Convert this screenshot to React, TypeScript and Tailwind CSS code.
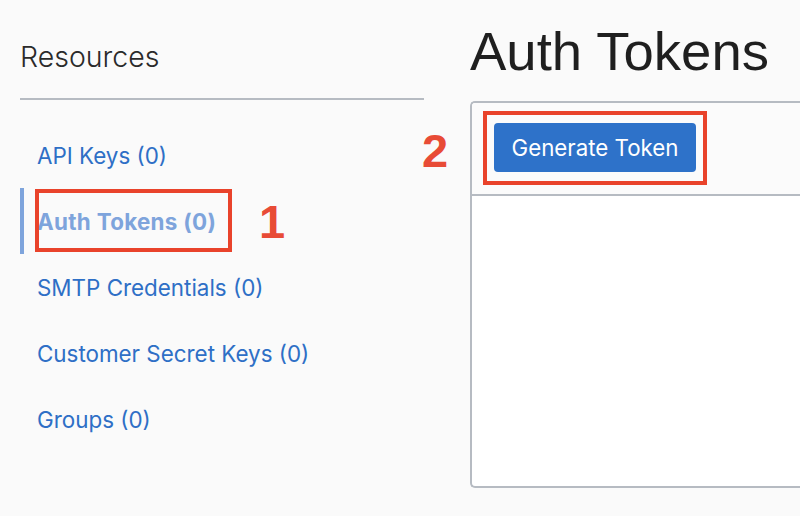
const resources = [
  { id: "api-keys", label: "API Keys (0)" },
  { id: "auth-tokens", label: "Auth Tokens (0)", active: true },
  { id: "smtp", label: "SMTP Credentials (0)" },
  { id: "secret-keys", label: "Customer Secret Keys (0)" },
  { id: "groups", label: "Groups (0)" },
];

export default function App() {
  return (
    <div className="flex h-[516px] w-[800px] overflow-hidden bg-[#fafafa] font-['Inter',sans-serif]">
      {/* left: resources menu */}
      <aside className="ml-[20px] w-[404px] shrink-0">
        <div className="h-[100px] border-b-2 border-[#b6bbc2] pt-[39px]">
          <h2 className="text-[28.5px] font-light leading-[36px] text-[#2a2a2a]">Resources</h2>
        </div>
        <nav className="mt-[22px] flex flex-col">
          {resources.map((item) => (
            <div
              key={item.id}
              className={`relative flex h-[66px] items-center border-l-4 pl-[13px] pt-[3px] ${
                item.active ? "border-[#7ea4dc]" : "border-transparent"
              }`}
            >
              <a
                href="#"
                className={`leading-none ${
                  item.active
                    ? "text-[22.4px] font-bold tracking-[0.3px] text-[#7ea4dc]"
                    : "text-[22.4px] text-[#2e6fc6]"
                }`}
              >
                {item.label}
              </a>
              {item.active && (
                <>
                  <span className="pointer-events-none absolute left-[11px] top-[1px] h-[63px] w-[197px] border-4 border-[#e9432b]" />
                  <span className="absolute left-[235px] top-[10px] font-['Liberation_Sans',sans-serif] text-[47px] font-bold leading-[48px] text-[#e84b36]">
                    1
                  </span>
                </>
              )}
            </div>
          ))}
        </nav>
      </aside>

      {/* right: auth tokens */}
      <main className="relative ml-[46px] w-[400px] shrink-0">
        <h1 className="h-[101px] pt-[21px] font-['Liberation_Sans',sans-serif] text-[54.5px] leading-[62px] text-[#1f1f1f]">
          Auth Tokens
        </h1>
        <section className="h-[387px] overflow-hidden rounded-l-[5px] border-2 border-r-0 border-[#b6bbc2] bg-white">
          <div className="relative h-[93px] border-b-2 border-[#b6bbc2] bg-[#fbfbfb] pl-[22px] pt-[20px]">
            <button className="h-[49px] w-[202px] rounded-[4px] bg-[#2e72c9] text-[22.3px] text-white">
              Generate Token
            </button>
            <span className="pointer-events-none absolute left-[11px] top-[8px] h-[74px] w-[224px] border-4 border-[#e9432b]" />
          </div>
        </section>
        <span className="absolute left-[-48px] top-[127px] font-['Liberation_Sans',sans-serif] text-[47px] font-bold leading-[48px] text-[#e84b36]">
          2
        </span>
      </main>
    </div>
  );
}
